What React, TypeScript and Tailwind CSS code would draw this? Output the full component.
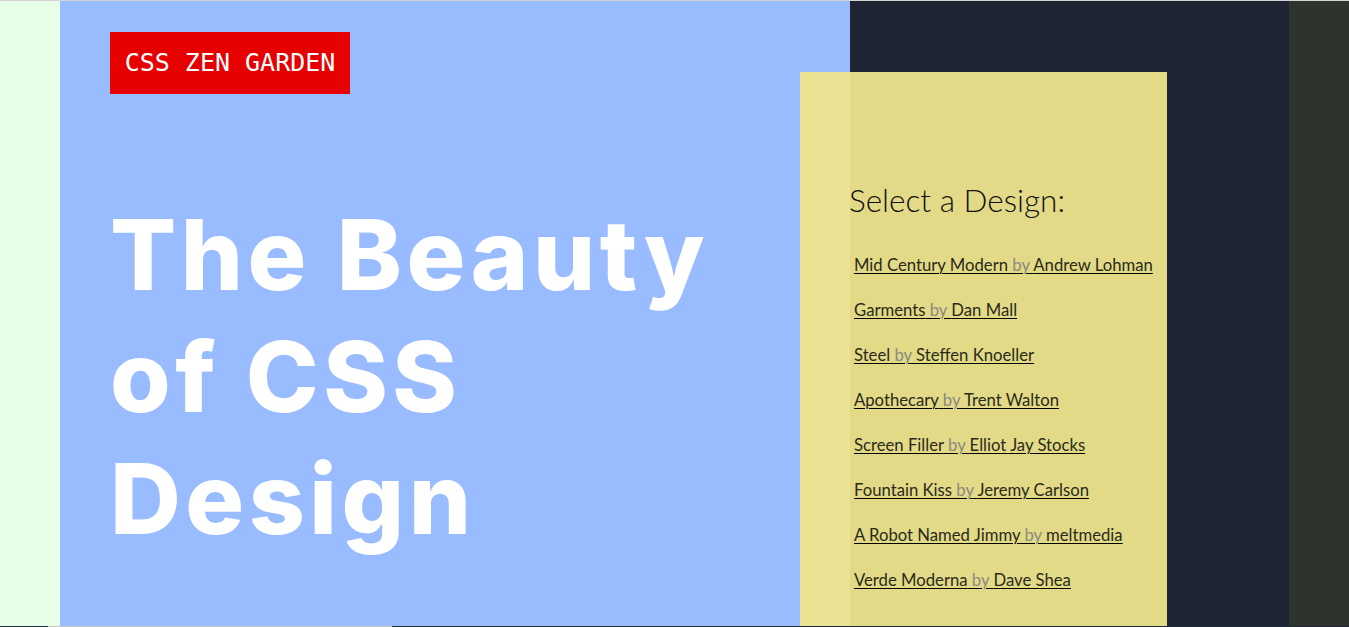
import React from "react";

const designs: [string, string][] = [
  ["Mid Century Modern", "Andrew Lohman"],
  ["Garments", "Dan Mall"],
  ["Steel", "Steffen Knoeller"],
  ["Apothecary", "Trent Walton"],
  ["Screen Filler", "Elliot Jay Stocks"],
  ["Fountain Kiss", "Jeremy Carlson"],
  ["A Robot Named Jimmy", "meltmedia"],
  ["Verde Moderna", "Dave Shea"],
];

export default function App() {
  return (
    <div className="flex h-[627px] w-[1349px] flex-col overflow-hidden bg-[#1f2433]">
      <div className="h-px shrink-0 bg-[#d3d3d3]" />
      <div className="flex h-[625px] shrink-0">
        <div className="w-[60px] shrink-0 bg-[#e6ffe6]" />
        <div className="w-[790px] shrink-0 bg-[#99bbff] pl-[50px] pt-[31px]">
          <div className="inline-flex h-[62px] w-[240px] items-center justify-center bg-[#e60000] font-['DejaVu_Sans_Mono',monospace] text-[25px] text-white">
            CSS ZEN GARDEN
          </div>
          <h1 className="mt-[100px] font-['Inter',sans-serif] text-[98px] font-extrabold leading-[122px] tracking-[4.5px] text-white">
            The Beauty
            <br />
            of CSS
            <br />
            Design
          </h1>
        </div>
        <div className="flex min-w-0 flex-1 bg-[#1f2433]">
          <div className="ml-[-50px] mt-[71px] w-[367px] shrink-0 bg-[rgba(240,230,140,0.94)] pl-[49px] pt-[108px] font-['Lato',sans-serif]">
            <h3 className="text-[31.5px] font-light leading-[40px] text-[#111]">Select a Design:</h3>
            <ul className="mt-[33px] pl-[5px]">
              {designs.map(([name, author]) => (
                <li key={name} className="h-[45px] text-[16.7px] leading-[24px] underline decoration-1 underline-offset-2">
                  <span className="text-[#2a2a1a] decoration-[#111]">{name}</span>
                  <span className="text-[#8a8a80] decoration-[#8a8a80]"> by </span>
                  <span className="text-[#2a2a1a] decoration-[#111]">{author}</span>
                </li>
              ))}
            </ul>
          </div>
          <div className="flex-1" />
          <div className="w-[60px] shrink-0 bg-[#2f332e]" />
        </div>
      </div>
      <div className="flex h-px shrink-0">
        <div className="w-[48px] bg-[#1f3040]" />
        <div className="w-[344px] bg-[#c4c4c4]" />
        <div className="flex-1 bg-[#1f2a3a]" />
      </div>
    </div>
  );
}
